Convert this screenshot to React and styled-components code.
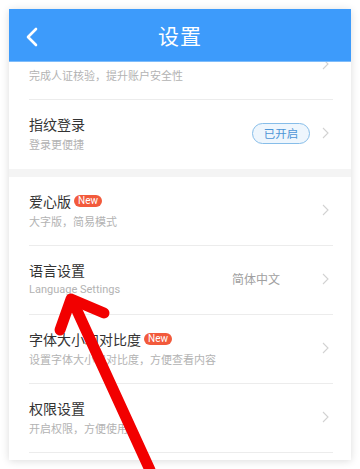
import React from 'react';
import styled, { createGlobalStyle } from 'styled-components';

const GlobalStyle = createGlobalStyle`
  html, body {
    margin: 0;
    padding: 0;
    background: #fff;
  }
  body {
    font-family: "Noto Sans CJK SC", "Noto Sans", sans-serif;
  }
`;

const Page = styled.div`
  position: relative;
  width: 360px;
  height: 469px;
  padding: 9px;
  box-sizing: border-box;
  overflow: hidden;
`;

const Phone = styled.div`
  width: 342px;
  height: 451px;
  display: flex;
  flex-direction: column;
  background: #f4f4f4;
  box-shadow: 0 1px 8px rgba(0, 0, 0, 0.14);
  overflow: hidden;
`;

const TopBar = styled.div`
  flex: 0 0 53px;
  position: relative;
  display: flex;
  align-items: center;
  justify-content: center;
  background: #3d9bfb;
  border-bottom: 1px solid #7fbcfa;
  box-sizing: border-box;
  z-index: 1;
`;

const BackButton = styled.div`
  position: absolute;
  left: 16px;
  top: 18px;
  width: 14px;
  height: 20px;
`;

const Title = styled.div`
  color: #fff;
  font-size: 21px;
  letter-spacing: 1px;
`;

const Body = styled.div`
  flex: 1;
  overflow: hidden;
`;

const Scroller = styled.div`
  margin-top: -31px;
  display: flex;
  flex-direction: column;
  gap: 8px;
`;

const Section = styled.div`
  background: #fff;
  padding-left: 20px;
`;

const Row = styled.div`
  display: flex;
  align-items: center;
  height: 69px;
  margin-right: 18px;
  padding-bottom: 3px;
  border-bottom: ${(p) => (p.$last ? 'none' : '1px solid #ececec')};
  box-sizing: border-box;
`;

const Texts = styled.div`
  flex: 1;
  display: flex;
  flex-direction: column;
`;

const RowTitle = styled.div`
  display: flex;
  align-items: center;
  gap: 3px;
  min-height: 20px;
  font-size: 14px;
  line-height: 20px;
  color: #333;
`;

const RowSub = styled.div`
  margin-top: 2px;
  min-height: 16px;
  font-size: 11px;
  line-height: 16px;
  color: #b3b3b3;
  font-family: ${(p) => (p.$latin ? '"Roboto", "Noto Sans", sans-serif' : 'inherit')};
`;

const NewBadge = styled.span`
  display: inline-flex;
  align-items: center;
  height: 12px;
  padding: 0 4px;
  border-radius: 6px;
  background: #f25a3c;
  color: #fff;
  font-family: "Roboto", "Liberation Sans", sans-serif;
  font-size: 10px;
  line-height: 12px;
`;

const Value = styled.div`
  font-size: 12px;
  color: #a0a0a0;
  margin-right: 42px;
`;

const Pill = styled.div`
  display: flex;
  align-items: center;
  justify-content: center;
  width: 58px;
  height: 21px;
  box-sizing: border-box;
  border: 1px solid #86bde9;
  border-radius: 11px;
  background: #eef6fd;
  color: #4d95d6;
  font-size: 11.5px;
  margin-right: 12px;
`;

const Chevron = styled.svg`
  flex: 0 0 auto;
  width: 7px;
  height: 12px;
  margin-right: 4px;
`;

const ArrowLayer = styled.svg`
  position: absolute;
  left: 0;
  top: 0;
  width: 360px;
  height: 469px;
  pointer-events: none;
`;

const Arrow = () => (
  <Chevron viewBox="0 0 7 12">
    <polyline points="1,1 6,6 1,11" fill="none" stroke="#d2d2d2" strokeWidth="1.1" />
  </Chevron>
);

const rowsA = [
  { title: '', sub: '完成人证核验，提升账户安全性' },
  { title: '指纹登录', sub: '登录更便捷', pill: '已开启', last: true },
];

const rowsB = [
  { title: '爱心版', sub: '大字版，简易模式', badge: true },
  { title: '语言设置', sub: 'Language Settings', value: '简体中文', latin: true },
  { title: '字体大小和对比度', sub: '设置字体大小和对比度，方便查看内容', badge: true },
  { title: '权限设置', sub: '开启权限，方便使用' },
  { title: '', sub: '', blank: true },
];

const SettingRow = ({ item }) => (
  <Row $last={item.last}>
    <Texts>
      <RowTitle>
        {item.title}
        {item.badge && <NewBadge>New</NewBadge>}
      </RowTitle>
      <RowSub $latin={item.latin}>{item.sub}</RowSub>
    </Texts>
    {item.value && <Value>{item.value}</Value>}
    {item.pill && <Pill>{item.pill}</Pill>}
    {!item.blank && <Arrow />}
  </Row>
);

const App = () => (
  <Page>
    <GlobalStyle />
    <Phone>
      <TopBar>
        <BackButton>
          <svg width="14" height="20" viewBox="0 0 14 20">
            <polyline points="11,2 3,10 11,18" fill="none" stroke="#fff" strokeWidth="2.6" strokeLinecap="round" strokeLinejoin="round" />
          </svg>
        </BackButton>
        <Title>设置</Title>
      </TopBar>
      <Body>
        <Scroller>
          <Section>
            {rowsA.map((item, i) => (
              <SettingRow key={i} item={item} />
            ))}
          </Section>
          <Section>
            {rowsB.map((item, i) => (
              <SettingRow key={i} item={item} />
            ))}
          </Section>
        </Scroller>
      </Body>
    </Phone>
    <ArrowLayer viewBox="0 0 360 469">
      <g fill="none" stroke="#f20000" strokeLinecap="round" strokeLinejoin="round">
        <line x1="150" y1="470" x2="74" y2="304" strokeWidth="11" />
        <polyline points="60,330 71,299 104,313" strokeWidth="11" />
      </g>
    </ArrowLayer>
  </Page>
);

export default App;
